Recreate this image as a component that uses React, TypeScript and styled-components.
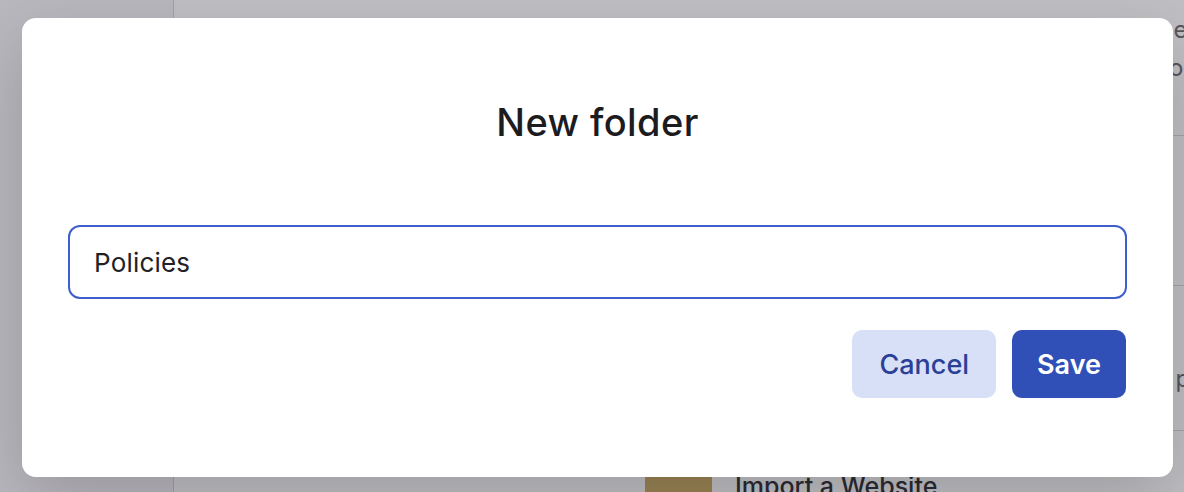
import React, { useState } from "react";
import styled, { createGlobalStyle } from "styled-components";

const GlobalStyle = createGlobalStyle`
  html, body {
    margin: 0;
    padding: 0;
    height: 100%;
    overflow: hidden;
  }
  body {
    font-family: Inter, "Noto Sans", sans-serif;
    background: #f4f3f8;
  }
  #root {
    height: 100%;
  }
`;

const Page = styled.div`
  position: relative;
  width: 1184px;
  height: 492px;
  display: flex;
  overflow: hidden;
  background: #f4f3f8;
`;

const Sidebar = styled.aside`
  width: 173px;
  flex-shrink: 0;
  border-right: 1px solid #d6d5dc;
  background: #f7f6fa;
`;

const Main = styled.main`
  flex: 1;
  min-width: 0;
  display: flex;
  flex-direction: column;
  padding-left: 471px;
  background: #ffffff;
  overflow: hidden;
`;

const Intro = styled.div`
  height: 136px;
  flex-shrink: 0;
  box-sizing: border-box;
  padding: 11px 0 0 90px;
  border-bottom: 1px solid #d9d8de;
  white-space: nowrap;
`;

const Row = styled.div<{ $h: number }>`
  height: ${({ $h }) => $h}px;
  flex-shrink: 0;
  display: flex;
  align-items: flex-start;
  gap: 23px;
  border-bottom: 1px solid #d9d8de;
  padding-top: 40px;
  box-sizing: border-box;
  white-space: nowrap;
`;

const Thumb = styled.div`
  width: 67px;
  height: 80px;
  border-radius: 4px;
  background: #cdaf69;
  flex-shrink: 0;
`;

const RowText = styled.div`
  display: flex;
  flex-direction: column;
  gap: 4px;
`;

const RowTitle = styled.span`
  font-size: 25px;
  line-height: 30px;
  font-weight: 500;
  color: #34343b;
`;

const RowDesc = styled.span`
  display: block;
  font-size: 24px;
  line-height: 38px;
  color: #6e6e76;
`;

const Overlay = styled.div`
  position: absolute;
  inset: 0;
  background: rgba(22, 20, 32, 0.27);
`;

const Modal = styled.div`
  position: absolute;
  left: 22px;
  top: 18px;
  width: 1151px;
  height: 459px;
  box-sizing: border-box;
  background: #ffffff;
  border-radius: 14px;
  padding: 82px 46px 0;
  display: flex;
  flex-direction: column;
  box-shadow: 0 24px 70px rgba(0, 0, 0, 0.18);
`;

const Title = styled.h2`
  margin: 0;
  height: 44px;
  line-height: 44px;
  text-align: center;
  font-size: 38px;
  font-weight: 500;
  color: #1c1c1f;
  letter-spacing: 0.4px;
`;

const Input = styled.input`
  margin-top: 81px;
  height: 74px;
  box-sizing: border-box;
  border: 2px solid #3f5fcf;
  border-radius: 12px;
  padding: 0 24px;
  font-family: Inter, "Noto Sans", sans-serif;
  font-size: 26px;
  letter-spacing: 0.2px;
  color: #222226;
  outline: none;
`;

const Actions = styled.div`
  margin-top: 31px;
  padding-right: 1px;
  display: flex;
  justify-content: flex-end;
  gap: 16px;
`;

const Button = styled.button<{ $primary?: boolean }>`
  height: 68px;
  padding: 0 ${({ $primary }) => ($primary ? 25 : 27)}px;
  border: none;
  border-radius: 10px;
  font-family: Inter, "Noto Sans", sans-serif;
  font-size: 27px;
  font-weight: ${({ $primary }) => ($primary ? 600 : 500)};
  background: ${({ $primary }) => ($primary ? "#3050b8" : "#d7e0f7")};
  color: ${({ $primary }) => ($primary ? "#ffffff" : "#2a4098")};
  cursor: pointer;
`;

export default function App() {
  const [name, setName] = useState("Policies");

  return (
    <>
      <GlobalStyle />
      <Page>
        <Sidebar />
        <Main>
          <Intro>
            <RowDesc>Pick how you wish to add content to the space and continue</RowDesc>
            <RowDesc>Everything can be changed later from our editor</RowDesc>
          </Intro>
          <Row $h={150}>
            <Thumb />
            <RowText>
              <RowTitle>Upload a document</RowTitle>
              <RowDesc>Add a PDF or Word file</RowDesc>
            </RowText>
          </Row>
          <Row $h={145}>
            <Thumb />
            <RowText>
              <RowTitle>Use a template</RowTitle>
              <RowDesc>Start from a template built by our legal policy experts</RowDesc>
            </RowText>
          </Row>
          <Row $h={140}>
            <Thumb />
            <RowText>
              <RowTitle>Import a Website</RowTitle>
            </RowText>
          </Row>
        </Main>
        <Overlay />
        <Modal>
          <Title>New folder</Title>
          <Input value={name} onChange={(e) => setName(e.target.value)} />
          <Actions>
            <Button>Cancel</Button>
            <Button $primary>Save</Button>
          </Actions>
        </Modal>
      </Page>
    </>
  );
}
